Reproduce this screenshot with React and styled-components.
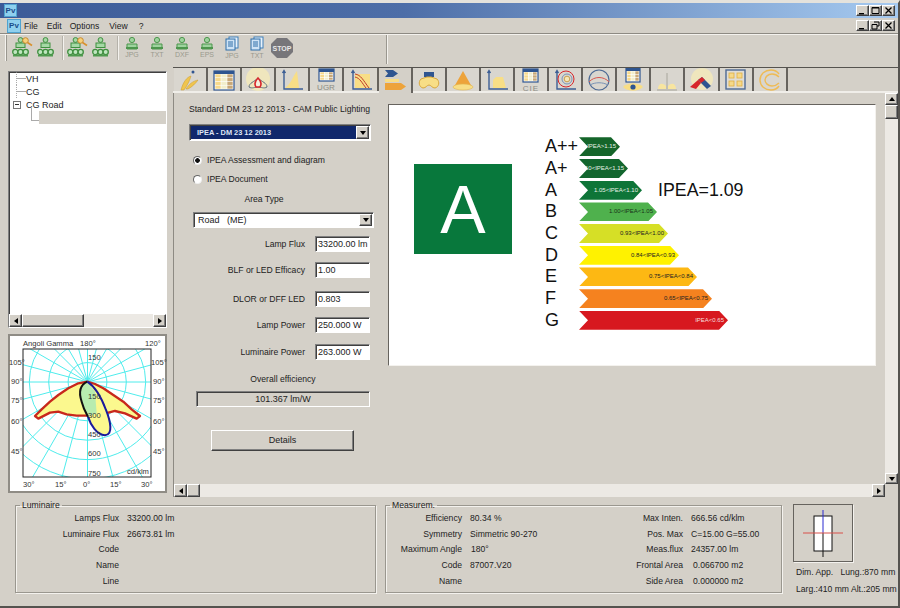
import styled, { createGlobalStyle, css } from "styled-components";

const GlobalStyle = createGlobalStyle`
  html, body { margin: 0; padding: 0; background: #d4d0c8; }
  * { box-sizing: border-box; }
`;

const raised = css`
  border: 1px solid;
  border-color: #fff #404040 #404040 #fff;
  box-shadow: inset -1px -1px 0 #808080;
  background: #d4d0c8;
`;

const sunken = css`
  border: 1px solid;
  border-color: #808080 #fff #fff #808080;
  box-shadow: inset 1px 1px 0 #404040;
`;

const Window = styled.div`
  width: 900px;
  height: 608px;
  display: flex;
  flex-direction: column;
  overflow: hidden;
  background: #d4d0c8;
  border-right: 2px solid #55534f;
  border-top: 3px solid #e4e2dc;
  font: 8.6px "Liberation Sans", Arial, sans-serif;
  color: #222;
`;

const TitleBar = styled.div`
  height: 15px;
  flex: none;
  display: flex;
  align-items: center;
  padding: 0 3px 0 4px;
  background: linear-gradient(90deg, #3c5b98 0%, #4d6ea8 45%, #a6caf0 100%);
`;

const WinButtons = styled.div`
  margin-left: auto;
  display: flex;
  align-items: center;
`;

const WinButton = styled.div`
  ${raised}
  width: 13px;
  height: 11px;
  display: flex;
  align-items: center;
  justify-content: center;
`;

const AppBadge = styled.div`
  width: ${(p) => p.$size}px;
  height: ${(p) => p.$size}px;
  background: #8fd0ee;
  border: 1px solid #4fa3d0;
  color: #1b4d8a;
  font: bold 8px "Liberation Sans", sans-serif;
  display: flex;
  align-items: center;
  justify-content: center;
`;

const MenuBar = styled.div`
  height: 16px;
  flex: none;
  display: flex;
  align-items: center;
  padding: 0 3px 0 7px;
  border-bottom: 1px solid #8d8a83;
`;

const MenuItem = styled.span`
  margin-left: ${(p) => p.$left}px;
`;

const ToolStrip = styled.div`
  height: 30px;
  flex: none;
  border-top: 1px solid #f4f2ee;
  display: flex;
`;

const ToolGroup = styled.div`
  width: 387px;
  display: flex;
  align-items: center;
  padding: 0 0 3px 5px;
  border-right: 1px solid #9a978f;
  box-shadow: 1px 0 0 #f4f2ee;
`;

const Grip = styled.div`
  width: 2px;
  height: 26px;
  background: #f4f2ee;
  border-right: 1px solid #9a978f;
  margin-right: 3px;
`;

const ToolSep = styled.div`
  width: 2px;
  height: 24px;
  background: #b5b2aa;
  border-right: 1px solid #f4f2ee;
  margin: 0 ${(p) => p.$after}px 0 2px;
`;

const ToolItem = styled.div`
  width: 25px;
  height: 24px;
  display: flex;
  justify-content: center;
  align-items: center;
`;

const Main = styled.div`
  flex: 1;
  min-height: 0;
  display: flex;
  padding-left: 8px;
`;

const LeftColumn = styled.div`
  width: 159px;
  flex: none;
  padding-top: 7px;
  display: flex;
  flex-direction: column;
  gap: 6px;
`;

const TreePanel = styled.div`
  ${sunken}
  height: 257px;
  background: #fff;
  display: flex;
  flex-direction: column;
  font-size: 9px;
`;

const TreeBody = styled.div`
  flex: 1;
`;

const TreeRow = styled.div`
  height: 13px;
  display: flex;
  align-items: center;
`;

const Guide = styled.span`
  width: 10px;
  height: 13px;
  margin-left: 7px;
  border-left: 1px dotted #888;
  background: linear-gradient(#888, #888) left center / 100% 1px no-repeat;
  opacity: 0.7;
`;

const Expander = styled.span`
  width: 8px;
  height: 8px;
  margin: 0 5px 0 4px;
  border: 1px solid #777;
  background: linear-gradient(#333, #333) center / 4px 1px no-repeat, #fff;
`;

const ChildGuide = styled.span`
  width: 8px;
  height: 13px;
  margin: -6px 0 0 22px;
  border-left: 1px solid #aaa;
  border-bottom: 1px solid #aaa;
`;

const SelectedItem = styled.span`
  flex: 1;
  height: 13px;
  background: #d4d0c8;
`;

const ScrollBar = styled.div`
  display: flex;
  flex: none;
  background: #ece9e4;
  ${(p) =>
    p.$vertical
      ? css`
          width: 13px;
          flex-direction: column;
        `
      : css`
          height: 13px;
        `}
`;

const ScrollButton = styled.div`
  ${raised}
  width: 13px;
  height: ${(p) => p.$h || 13}px;
  flex: none;
  display: flex;
  align-items: center;
  justify-content: center;
  &::after {
    content: "";
    border: 3px solid transparent;
    ${(p) => p.$dir === "left" && "border-right: 4px solid #000; border-left: 0;"}
    ${(p) => p.$dir === "right" && "border-left: 4px solid #000; border-right: 0;"}
    ${(p) => p.$dir === "up" && "border-bottom: 4px solid #000; border-top: 0;"}
    ${(p) => p.$dir === "down" && "border-top: 4px solid #000; border-bottom: 0;"}
  }
`;

const ScrollThumb = styled.div`
  ${raised}
  flex: none;
  width: ${(p) => (p.$len && !p.$vertical ? `${p.$len}px` : "13px")};
  height: ${(p) => (p.$vertical ? `${p.$len}px` : "13px")};
`;

const Spacer = styled.div`
  flex: 1;
`;

const CornerGap = styled.div`
  flex: none;
  height: 13px;
  background: #d4d0c8;
`;

const PolarPanel = styled.div`
  height: 159px;
  background: #fff;
  box-shadow: inset 0 0 0 2px #8f8c85;
  svg {
    display: block;
  }
`;

const TabPanel = styled.div`
  flex: 1;
  min-width: 0;
  margin: 3px 0 2px 6px;
  border-top: 1px solid #55534f;
  display: flex;
  flex-direction: column;
`;

const TabStrip = styled.div`
  height: 25px;
  flex: none;
  display: flex;
  padding-left: 1px;
  border-bottom: 2px solid #f0eee9;
`;

const Tab = styled.div`
  width: 34.1px;
  flex: none;
  display: flex;
  align-items: center;
  justify-content: center;
  background: ${(p) => (p.$active ? "#d4d0c8" : "#d9d6cf")};
  border-right: 2px solid #66635e;
  ${(p) => p.$active && "margin-bottom: -2px;"}
`;

const PanelBody = styled.div`
  flex: 1;
  min-height: 0;
  display: flex;
  border-left: 1px solid #8d8a83;
`;

const PanelInner = styled.div`
  flex: 1;
  min-width: 0;
  display: flex;
  flex-direction: column;
`;

const Content = styled.div`
  flex: 1;
  min-height: 0;
  display: flex;
`;

const FormColumn = styled.div`
  width: 214px;
  flex: none;
  padding: 11px 0 0 15px;
  display: flex;
  flex-direction: column;
  align-items: flex-start;
`;

const Heading = styled.div`
  line-height: 11px;
`;

const Combo = styled.div`
  ${sunken}
  height: ${(p) => p.$h}px;
  width: ${(p) => p.$w}px;
  margin: ${(p) => p.$margin};
  display: flex;
  align-items: stretch;
  padding: 1px;
  background: #fff;
`;

const ComboText = styled.div`
  flex: 1;
  display: flex;
  align-items: center;
  padding-left: ${(p) => (p.$active ? 6 : 3)}px;
  font-size: ${(p) => (p.$active ? 7.4 : 9)}px;
  font-weight: ${(p) => (p.$active ? "bold" : "normal")};
  background: ${(p) => (p.$active ? "#10286c" : "#fff")};
  color: ${(p) => (p.$active ? "#dfe6f5" : "#222")};
  white-space: pre;
`;

const ComboArrow = styled.div`
  ${raised}
  width: 13px;
  flex: none;
  display: flex;
  align-items: center;
  justify-content: center;
  &::after {
    content: "";
    border: 3px solid transparent;
    border-top: 4px solid #000;
    border-bottom: 0;
  }
`;

const RadioRow = styled.label`
  display: flex;
  align-items: center;
  gap: 5px;
  height: 12px;
  margin: ${(p) => p.$margin};
`;

const RadioDot = styled.span`
  width: 9px;
  height: 9px;
  border-radius: 50%;
  border: 1px solid;
  border-color: #666 #eee #eee #666;
  background: ${(p) =>
    p.$on ? "radial-gradient(circle, #111 0 2px, #fff 2.6px)" : "#fff"};
`;

const CenterLabel = styled.div`
  width: ${(p) => p.$w}px;
  text-align: center;
  line-height: 11px;
  margin: ${(p) => p.$margin};
`;

const FieldRow = styled.div`
  width: 181px;
  margin-top: ${(p) => p.$top}px;
  display: flex;
  align-items: center;
  justify-content: flex-end;
  gap: 10px;
`;

const FieldInput = styled.input`
  ${sunken}
  width: 55px;
  height: 16px;
  padding: 0 0 0 2px;
  background: #fff;
  font: 9px "Liberation Sans", Arial, sans-serif;
  color: #222;
  outline: none;
  border-radius: 0;
`;

const Readout = styled.div`
  ${sunken}
  width: 174px;
  height: 16px;
  margin: 6px 0 0 7px;
  text-align: center;
  line-height: 14px;
  font-size: 9px;
`;

const PushButton = styled.div`
  ${raised}
  width: 143px;
  height: 21px;
  margin: 23px 0 0 22px;
  text-align: center;
  line-height: 19px;
  font-size: 9px;
`;

const ChartCard = styled.div`
  width: 488px;
  height: 262px;
  margin-top: 11px;
  flex: none;
  background: #fff;
  border: 1px solid #777;
  border-color: #66635e #f4f2ee #f4f2ee #66635e;
  display: flex;
  align-items: flex-start;
  padding: 31px 0 0 25px;
`;

const ClassBox = styled.div`
  width: 98px;
  height: 90px;
  flex: none;
  margin: 28px 33px 0 0;
  background: #08783c;
  color: #fff;
  font: 68px/90px "Liberation Sans", Arial, sans-serif;
  text-align: center;
`;

const Scale = styled.div`
  display: flex;
  flex-direction: column;
`;

const ScaleRow = styled.div`
  height: 21.7px;
  display: flex;
  align-items: center;
`;

const ScaleLetter = styled.div`
  width: 34px;
  flex: none;
  font-size: 18px;
  color: #111;
`;

const Arrow = styled.div`
  height: 19px;
  width: ${(p) => p.$w}px;
  flex: none;
  background: ${(p) => p.$bg};
  color: ${(p) => p.$fg};
  font-size: 6px;
  line-height: 19px;
  padding-right: 4px;
  display: flex;
  justify-content: flex-end;
  white-space: nowrap;
  clip-path: polygon(0 0, calc(100% - 9px) 0, 100% 50%, calc(100% - 9px) 100%, 0 100%, 9px 50%);
`;

const ScoreText = styled.div`
  margin-left: 16px;
  font-size: 17.8px;
  color: #111;
  white-space: nowrap;
`;

const BottomBar = styled.div`
  height: 109px;
  flex: none;
  display: flex;
  padding: 7px 0 0 15px;
  border-bottom: 2px solid #55534f;
`;

const Group = styled.fieldset`
  width: ${(p) => p.$w}px;
  height: 93px;
  margin: -6px ${(p) => p.$gap}px 0 0;
  padding: 0;
  flex: none;
  border: 1px solid #9a978f;
  box-shadow: 1px 1px 0 #f4f2ee, inset 1px 1px 0 #f4f2ee;
  legend {
    margin-left: 4px;
    padding: 0 2px;
    line-height: 10px;
  }
`;

const InfoGrid = styled.div`
  display: grid;
  grid-template-columns: ${(p) => p.$columns};
  grid-auto-rows: 15.7px;
  column-gap: 8px;
  align-items: center;
`;

const InfoLabel = styled.div`
  text-align: right;
  white-space: nowrap;
`;

const InfoValue = styled.div`
  white-space: nowrap;
  padding-left: ${(p) => p.$nudge || 0}px;
`;

const DimColumn = styled.div`
  width: 107px;
  flex: none;
  margin-left: 11px;
  margin-top: -2px;
`;

const DimBox = styled.div`
  width: 60px;
  height: 58px;
  border: 1px solid #66635e;
  box-shadow: 1px 1px 0 #f4f2ee;
  svg {
    display: block;
  }
`;

const DimText = styled.div`
  margin: ${(p) => p.$top}px 0 0 3px;
  line-height: 11px;
  white-space: pre;
`;

function PeopleIcon({ search }) {
  return (
    <svg width="24" height="24" viewBox="-1.5 0 24 24">
      <circle cx="8" cy="4" r="2.4" fill="#a5d8a5" stroke="#3f8f3f" />
      <rect x="3.5" y="7" width="9" height="4.5" fill="#a5d8a5" stroke="#3f8f3f" />
      {[2.8, 8, 13.2].map((x) => (
        <circle key={x} cx={x} cy="16" r="2.6" fill="#bfe5bf" stroke="#3f8f3f" strokeWidth="1.3" />
      ))}
      <rect x="0.5" y="18.5" width="15" height="2" fill="#4f9a4f" />
      {search && (
        <g>
          <circle cx="13" cy="4.5" r="2.8" fill="#f7d07a" stroke="#c98a2e" />
          <path d="M15 6.5l4.5 3" stroke="#d9902c" strokeWidth="1.6" />
        </g>
      )}
    </svg>
  );
}

function ExportIcon({ label }) {
  return (
    <svg width="24" height="24" viewBox="0 0 24 24">
      <circle cx="12" cy="4" r="2.6" fill="#9ed39e" stroke="#4d964d" />
      <path d="M7 8h10v5H7z" fill="#9ed39e" stroke="#4d964d" />
      <rect x="6" y="11" width="12" height="2" fill="#4d964d" />
      <text x="12" y="21" textAnchor="middle" fontSize="7" fontFamily="Liberation Sans" fill="#9a9a8e">
        {label}
      </text>
    </svg>
  );
}

function DocIcon({ label }) {
  return (
    <svg width="24" height="24" viewBox="0 0 24 24">
      <rect x="9" y="1" width="9" height="11" fill="#e8f2fb" stroke="#3f7fb8" />
      <rect x="6" y="3" width="9" height="11" fill="#cfe3f5" stroke="#2f6ea8" />
      <path d="M8 6h5M8 8h5M8 10h5" stroke="#2f6ea8" />
      <text x="12" y="21.5" textAnchor="middle" fontSize="7" fontFamily="Liberation Sans" fill="#9a9a8e">
        {label}
      </text>
    </svg>
  );
}

function StopIcon() {
  return (
    <svg width="24" height="24" viewBox="0 0 24 24">
      <path d="M7 2h10l6 6v8l-6 6H7l-6-6V8z" fill="#77767a" />
      <text x="12" y="14.5" textAnchor="middle" fontSize="7" fontWeight="bold" fontFamily="Liberation Sans" fill="#e8e8e8">
        STOP
      </text>
    </svg>
  );
}

function MiniTable({ x = 5, y = 2, w = 16, h = 14, rows = 3 }) {
  const cw = (w - 2) / 3;
  const ch = (h - 4) / rows;
  const colors = ["#f7d98a", "#f2eecb", "#c9a878"];
  const cells = [];
  for (let r = 0; r < rows; r++) {
    for (let c = 0; c < 3; c++) {
      cells.push(
        <rect key={`${r}-${c}`} x={x + 1 + c * cw + 0.3} y={y + 3 + r * ch + 0.3} width={cw - 0.6} height={ch - 0.6} fill={colors[c]} />
      );
    }
  }
  return (
    <g>
      <rect x={x} y={y} width={w} height={h} fill="#fff" stroke="#2f5590" strokeWidth="1.2" />
      <rect x={x} y={y} width={w} height="3" fill="#2f5590" />
      {cells}
    </g>
  );
}

const Axes = () => (
  <path d="M5 3v18h19M3.5 5L5 2.5 6.5 5" fill="none" stroke="#3d5f95" strokeWidth="1.4" />
);

const caption = { fontSize: 8, fontFamily: "Liberation Sans", fill: "#8c8c84", textAnchor: "middle" };

const tabIcons = [
  <g key="info">
    <circle cx="16" cy="4" r="1.5" fill="#2f5590" />
    <path d="M4 22C6 14 10 9 14 8c-1 4-4 10-7 14zM9 21c3-5 7-8 12-9-2 3-6 7-10 9z" fill="#f0c54e" stroke="#c99a30" strokeWidth=".5" />
  </g>,
  <MiniTable key="table" x={3} y={3} w={20} h={19} rows={4} />,
  <g key="polar">
    <circle cx="13" cy="11" r="12" fill="#efe6bd" />
    <path d="M4 19c0-4 5-5 9-9 4 4 9 5 9 9-3 2-6 0-9 0s-6 2-9 0z" fill="#efe6bd" stroke="#5f6f80" />
    <path d="M13 10c3 3 4 6 2 9h-4c-2-3-1-6 2-9z" fill="#f6efdc" stroke="#d7262b" strokeWidth="1.6" />
  </g>,
  <g key="curve">
    <Axes />
    <path d="M6 20C12 16 14 8 18 3l2 17z" fill="#f8de86" />
  </g>,
  <g key="ugr">
    <MiniTable x={6} y={1} w={15} h={12} rows={3} />
    <text x="13" y="22" {...caption}>UGR</text>
  </g>,
  <g key="iso">
    <Axes />
    <rect x="7" y="6" width="15" height="14" fill="#f8de86" />
    <path d="M7 6c6 1 8 6 14 14M7 9c5 1 7 6 11 11" fill="none" stroke="#c0392b" />
  </g>,
  <g key="energy">
    <path d="M3 1h8l5 3.5-5 3.5H3l3-3.5z" fill="#2f5590" />
    <path d="M3 10h14v3H3z" fill="#f8de86" />
    <path d="M3 14h16l5 3.5-5 3.5H3z" fill="#eda33a" />
  </g>,
  <g key="lobes">
    <rect x="8" y="4" width="10" height="5" fill="#2f5590" />
    <path d="M5 11l6-2h4l6 2c3 3 2 8-2 9-3 0-4-3-6-3s-3 3-6 3c-4-1-5-6-2-9z" fill="#f8de86" stroke="#d9a83c" />
  </g>,
  <g key="cone">
    <path d="M13 3L22 19H4z" fill="#eda33a" />
    <ellipse cx="13" cy="19" rx="10" ry="3" fill="#f8de86" stroke="#e0b550" strokeWidth=".6" />
  </g>,
  <g key="flat">
    <Axes />
    <path d="M9 20v-8l3-3h7l3 11z" fill="#f8de86" />
  </g>,
  <g key="cie">
    <MiniTable x={5} y={1} w={15} h={13} rows={3} />
    <text x="13" y="22.5" {...caption} letterSpacing="1">CIE</text>
  </g>,
  <g key="rings">
    <Axes />
    <circle cx="14" cy="11" r="8" fill="none" stroke="#d7262b" />
    <circle cx="15" cy="11" r="5" fill="none" stroke="#7a93b5" />
    <circle cx="15" cy="11" r="2.8" fill="#f6e7b8" stroke="#c9a050" />
  </g>,
  <g key="dome">
    <circle cx="13" cy="12" r="10" fill="none" stroke="#4d6a94" strokeWidth="1.2" />
    <path d="M3 14c5-6 15-6 20 0" fill="none" stroke="#d7574f" />
    <path d="M4 17c5-3 13-3 18 0" fill="none" stroke="#7a93b5" />
  </g>,
  <g key="eye">
    <MiniTable x={6} y={0} w={14} h={14} rows={3} />
    <path d="M3 19c5-5 15-5 20 0-5 5-15 5-20 0z" fill="#f8de86" />
    <circle cx="13" cy="19" r="2.6" fill="#2f5590" />
  </g>,
  <g key="spot">
    <path d="M13 5v16M3 22h20" stroke="#a8a69c" strokeWidth="1" />
    <path d="M4 21c0-5 4-7 8-3v3zM14 21v-3c4-4 8-2 8 3z" fill="#f8e5a0" />
  </g>,
  <g key="chevron">
    <circle cx="14" cy="11" r="11" fill="#efe6bd" />
    <path d="M2 19l8-7 3 3-5 6z" fill="#d7262b" />
    <path d="M10 12l4-3 9 9-4 3-6-6z" fill="#2f5590" />
    <path d="M10 12l4-3 3 3-4 3z" fill="#d7262b" />
  </g>,
  <g key="grid">
    <rect x="3" y="2" width="19" height="19" fill="#e0ddd6" stroke="#4d6a94" strokeWidth="1.4" />
    {[6, 14].map((x) =>
      [5, 13].map((y) => <rect key={`${x}${y}`} x={x} y={y} width="5" height="5" fill="#f5d98a" stroke="#e0b040" strokeWidth=".8" />)
    )}
  </g>,
  <g key="c">
    <path d="M22 6c-2-3-5-4-8-4C8 2 3 6 3 12s5 10 11 10c3 0 6-1 8-4" fill="none" stroke="#eebb55" strokeWidth="1.4" />
    <path d="M22 9c-2-2-4-3-7-3-4 0-7 3-7 6s3 6 7 6c3 0 5-1 7-3" fill="none" stroke="#eebb55" strokeWidth="1.4" />
  </g>,
];

const energyRows = [
  { letter: "A++", w: 41, bg: "#15652a", fg: "#e8f2e8", text: "IPEA>1.15" },
  { letter: "A+", w: 49, bg: "#12662e", fg: "#e8f2e8", text: "1.10<IPEA<1.15" },
  { letter: "A", w: 63, bg: "#0e7538", fg: "#e8f2e8", text: "1.05<IPEA<1.10", score: "IPEA=1.09" },
  { letter: "B", w: 78, bg: "#4fb14d", fg: "#18331a", text: "1.00<IPEA<1.05" },
  { letter: "C", w: 89, bg: "#d6df26", fg: "#222", text: "0.93<IPEA<1.00" },
  { letter: "D", w: 100, bg: "#fff200", fg: "#222", text: "0.84<IPEA<0.93" },
  { letter: "E", w: 118, bg: "#fdb813", fg: "#222", text: "0.75<IPEA<0.84" },
  { letter: "F", w: 133, bg: "#f5821f", fg: "#222", text: "0.65<IPEA<0.75" },
  { letter: "G", w: 149, bg: "#d7181f", fg: "#f6dede", text: "IPEA<0.65" },
];

const fields = [
  { label: "Lamp Flux", value: "33200.00 lm", top: 8 },
  { label: "BLF or LED Efficacy", value: "1.00", top: 10 },
  { label: "DLOR or DFF LED", value: "0.803", top: 13 },
  { label: "Lamp Power", value: "250.000 W", top: 10 },
  { label: "Luminaire Power", value: "263.000 W", top: 11 },
];

const luminaire = [
  ["Lamps Flux", "33200.00 lm"],
  ["Luminaire Flux", "26673.81 lm"],
  ["Code", ""],
  ["Name", ""],
  ["Line", ""],
];

const measures = [
  ["Efficiency", "80.34 %", 0, "Max Inten.", "666.56  cd/klm", 0],
  ["Symmetry", "Simmetric 90-270", 0, "Pos. Max", "C=15.00 G=55.00", 0],
  ["Maximum Angle", "180°", 1, "Meas.flux", "24357.00 lm", 0],
  ["Code", "87007.V20", 0, "Frontal Area", "0.066700 m2", 2],
  ["Name", "", 0, "Side Area", "0.000000 m2", 2],
];

const polarText = { fontSize: 7.6, fontFamily: "Liberation Sans", fill: "#333" };

function PolarChart() {
  const cx = 87.5;
  const cy = 382;
  const spokes = [];
  for (let a = 0; a < 360; a += 15) {
    const r = (a * Math.PI) / 180;
    spokes.push(
      <line key={a} x1={cx} y1={cy} x2={cx + 200 * Math.cos(r)} y2={cy + 200 * Math.sin(r)} />
    );
  }
  return (
    <svg width="159" height="159" viewBox="8 334 159 159">
      <defs>
        <clipPath id="polarBox">
          <rect x="23" y="349" width="128" height="128" />
        </clipPath>
      </defs>
      <g clipPath="url(#polarBox)" fill="none" stroke="#4fecec" strokeWidth="1">
        {spokes}
        {[1, 2, 3, 4, 5, 6, 7].map((k) => (
          <circle key={k} cx={cx} cy={cy} r={k * 19.4} />
        ))}
      </g>
      <g transform="translate(0 320) scale(0.3333)">
        <path
          d="M262 185L235 190 205 205 175 225 150 245 125 268 105 288 115 296 150 278 175 275 200 283 230 287 265 287 300 285 345 273 375 280 410 296 420 288 395 268 370 245 340 225 310 205 285 192z"
          fill="#fbf88e"
          stroke="#c8281c"
          strokeWidth="7"
          strokeLinejoin="round"
        />
        <path d="M262 185C285 200 305 235 318 270 332 305 340 345 315 346 290 345 272 315 262 285z" fill="#fbf88e" />
        <path d="M262 185C240 195 235 215 245 245 250 265 256 275 264 290L290 280 285 215z" fill="#a8e8b8" fillOpacity=".8" />
        <path d="M262 185C240 195 235 215 245 245 250 265 256 275 264 290" fill="none" stroke="#111" strokeWidth="6" />
        <path d="M262 185C285 200 305 235 318 270 332 305 340 345 315 346 290 345 272 315 264 290" fill="none" stroke="#1a1a9c" strokeWidth="6" />
      </g>
      <rect x="23" y="349" width="128" height="128" fill="none" stroke="#222" strokeWidth="1" />
      <g {...polarText}>
        <text x="23" y="346">Angoli Gamma</text>
        <text x="80" y="346">180°</text>
        <text x="145" y="346">120°</text>
        {[["105°", 9, 365], ["90°", 11, 384], ["75°", 11, 403], ["60°", 11, 424], ["45°", 11, 454]].map(([t, x, y]) => (
          <text key={t} x={x} y={y}>{t}</text>
        ))}
        {[["105°", 151, 365], ["90°", 153, 384], ["75°", 153, 403], ["60°", 153, 424], ["45°", 153, 454]].map(([t, x, y]) => (
          <text key={t} x={x} y={y}>{t}</text>
        ))}
        {[["30°", 23], ["15°", 55], ["0°", 83], ["15° ", 110], ["30° ", 141]].map(([t, x]) => (
          <text key={t} x={x} y="487">{t}</text>
        ))}
        {[[150, 360], ["150 ", 399], [300, 418], [450, 437], [600, 456], [750, 476]].map(([t, y]) => (
          <text key={t} x="88" y={y}>{t}</text>
        ))}
        <text x="127" y="474">cd/klm</text>
      </g>
    </svg>
  );
}

function App() {
  return (
    <Window>
      <GlobalStyle />
      <TitleBar>
        <AppBadge $size={13}>Pv</AppBadge>
        <WinButtons>
          <WinButton>
            <svg width="9" height="9" viewBox="0 0 9 9"><path d="M1 7h5v1.4H1z" /></svg>
          </WinButton>
          <WinButton>
            <svg width="9" height="9" viewBox="0 0 9 9"><path d="M1 1.5h7v6H1z" fill="none" stroke="#000" /><path d="M1 1h7v1.5H1z" /></svg>
          </WinButton>
          <WinButton>
            <svg width="9" height="9" viewBox="0 0 9 9"><path d="M1.5 1.5l6 6M7.5 1.5l-6 6" stroke="#000" strokeWidth="1.3" /></svg>
          </WinButton>
        </WinButtons>
      </TitleBar>
      <MenuBar>
        <AppBadge $size={14}>Pv</AppBadge>
        <MenuItem $left={3}>File</MenuItem>
        <MenuItem $left={9}>Edit</MenuItem>
        <MenuItem $left={8}>Options</MenuItem>
        <MenuItem $left={10}>View</MenuItem>
        <MenuItem $left={11}>?</MenuItem>
        <WinButtons>
          <WinButton>
            <svg width="9" height="9" viewBox="0 0 9 9"><path d="M1 7h5v1.4H1z" /></svg>
          </WinButton>
          <WinButton>
            <svg width="9" height="9" viewBox="0 0 9 9"><path d="M3 1h5v4H6M1 3.5h5v4.5H1z" fill="none" stroke="#000" /></svg>
          </WinButton>
          <WinButton>
            <svg width="9" height="9" viewBox="0 0 9 9"><path d="M1.5 1.5l6 6M7.5 1.5l-6 6" stroke="#000" strokeWidth="1.3" /></svg>
          </WinButton>
        </WinButtons>
      </MenuBar>
      <ToolStrip>
        <ToolGroup>
          <Grip />
          <ToolItem><PeopleIcon search /></ToolItem>
          <ToolItem><PeopleIcon /></ToolItem>
          <ToolSep $after={1} />
          <ToolItem><PeopleIcon search /></ToolItem>
          <ToolItem><PeopleIcon /></ToolItem>
          <ToolSep $after={0} />
          <ToolItem><ExportIcon label="JPG" /></ToolItem>
          <ToolItem><ExportIcon label="TXT" /></ToolItem>
          <ToolItem><ExportIcon label="DXF" /></ToolItem>
          <ToolItem><ExportIcon label="EPS" /></ToolItem>
          <ToolItem><DocIcon label="JPG" /></ToolItem>
          <ToolItem><DocIcon label="TXT" /></ToolItem>
          <ToolItem><StopIcon /></ToolItem>
        </ToolGroup>
      </ToolStrip>
      <Main>
        <LeftColumn>
          <TreePanel>
            <TreeBody>
              <TreeRow><Guide />VH</TreeRow>
              <TreeRow><Guide />CG</TreeRow>
              <TreeRow><Expander />CG Road</TreeRow>
              <TreeRow><ChildGuide /><SelectedItem /></TreeRow>
            </TreeBody>
            <ScrollBar>
              <ScrollButton $dir="left" />
              <ScrollThumb $len={62} />
              <Spacer />
              <ScrollButton $dir="right" />
            </ScrollBar>
          </TreePanel>
          <PolarPanel>
            <PolarChart />
          </PolarPanel>
        </LeftColumn>
        <TabPanel>
          <TabStrip>
            {tabIcons.map((icon, i) => (
              <Tab key={i} $active={i === 6}>
                <svg width="26" height="24" viewBox="0 0 26 24">{icon}</svg>
              </Tab>
            ))}
          </TabStrip>
          <PanelBody>
            <PanelInner>
              <Content>
                <FormColumn>
                  <Heading>Standard DM 23 12 2013 - CAM Public Lighting</Heading>
                  <Combo $w={182} $h={17} $margin="9px 0 0 0">
                    <ComboText $active>IPEA - DM 23 12 2013</ComboText>
                    <ComboArrow />
                  </Combo>
                  <RadioRow $margin="13px 0 0 4px"><RadioDot $on />IPEA Assessment and diagram</RadioRow>
                  <RadioRow $margin="7px 0 0 4px"><RadioDot />IPEA Document</RadioRow>
                  <CenterLabel $w={150} $margin="9px 0 0 0">Area Type</CenterLabel>
                  <Combo $w={181} $h={16} $margin="7px 0 0 4px">
                    <ComboText>{"Road   (ME)"}</ComboText>
                    <ComboArrow />
                  </Combo>
                  {fields.map((f) => (
                    <FieldRow key={f.label} $top={f.top}>
                      <span>{f.label}</span>
                      <FieldInput readOnly defaultValue={f.value} />
                    </FieldRow>
                  ))}
                  <CenterLabel $w={188} $margin="14px 0 0 0">Overall efficiency</CenterLabel>
                  <Readout>101.367 lm/W</Readout>
                  <PushButton>Details</PushButton>
                </FormColumn>
                <ChartCard>
                  <ClassBox>A</ClassBox>
                  <Scale>
                    {energyRows.map((r) => (
                      <ScaleRow key={r.letter}>
                        <ScaleLetter>{r.letter}</ScaleLetter>
                        <Arrow $w={r.w} $bg={r.bg} $fg={r.fg}>{r.text}</Arrow>
                        {r.score && <ScoreText>{r.score}</ScoreText>}
                      </ScaleRow>
                    ))}
                  </Scale>
                </ChartCard>
              </Content>
              <ScrollBar>
                <ScrollButton $dir="left" />
                <ScrollThumb $len={13} />
                <Spacer />
                <ScrollButton $dir="right" />
              </ScrollBar>
            </PanelInner>
            <ScrollBar $vertical>
              <ScrollButton $dir="up" $h={12} />
              <ScrollThumb $vertical $len={14} />
              <Spacer />
              <ScrollButton $dir="down" $h={11} />
              <CornerGap />
            </ScrollBar>
          </PanelBody>
        </TabPanel>
      </Main>
      <BottomBar>
        <Group $w={361} $gap={9}>
          <legend>Luminaire</legend>
          <InfoGrid $columns="103px 1fr">
            {luminaire.map(([k, v]) => [
              <InfoLabel key={k}>{k}</InfoLabel>,
              <InfoValue key={`${k}-v`}>{v}</InfoValue>,
            ])}
          </InfoGrid>
        </Group>
        <Group $w={397} $gap={0}>
          <legend>Measurem.</legend>
          <InfoGrid $columns="76px 122px 83px 1fr">
            {measures.map(([a, b, n1, c, d, n2]) => [
              <InfoLabel key={a}>{a}</InfoLabel>,
              <InfoValue key={`${a}-v`} $nudge={n1}>{b}</InfoValue>,
              <InfoLabel key={c}>{c}</InfoLabel>,
              <InfoValue key={`${c}-v`} $nudge={n2}>{d}</InfoValue>,
            ])}
          </InfoGrid>
        </Group>
        <DimColumn>
          <DimBox>
            <svg width="58" height="56" viewBox="0 0 58 56">
              <rect x="20" y="11" width="18" height="35" fill="#fff" stroke="#111" />
              <path d="M29 5v23" stroke="#2a2ad0" />
              <path d="M29 28v24" stroke="#111" />
              <path d="M9 28h40" stroke="#d8504a" />
            </svg>
          </DimBox>
          <DimText $top={5}>{"Dim. App.   Lung.:870 mm"}</DimText>
          <DimText $top={6}>Larg.:410 mm Alt.:205 mm</DimText>
        </DimColumn>
      </BottomBar>
    </Window>
  );
}

export default App;
